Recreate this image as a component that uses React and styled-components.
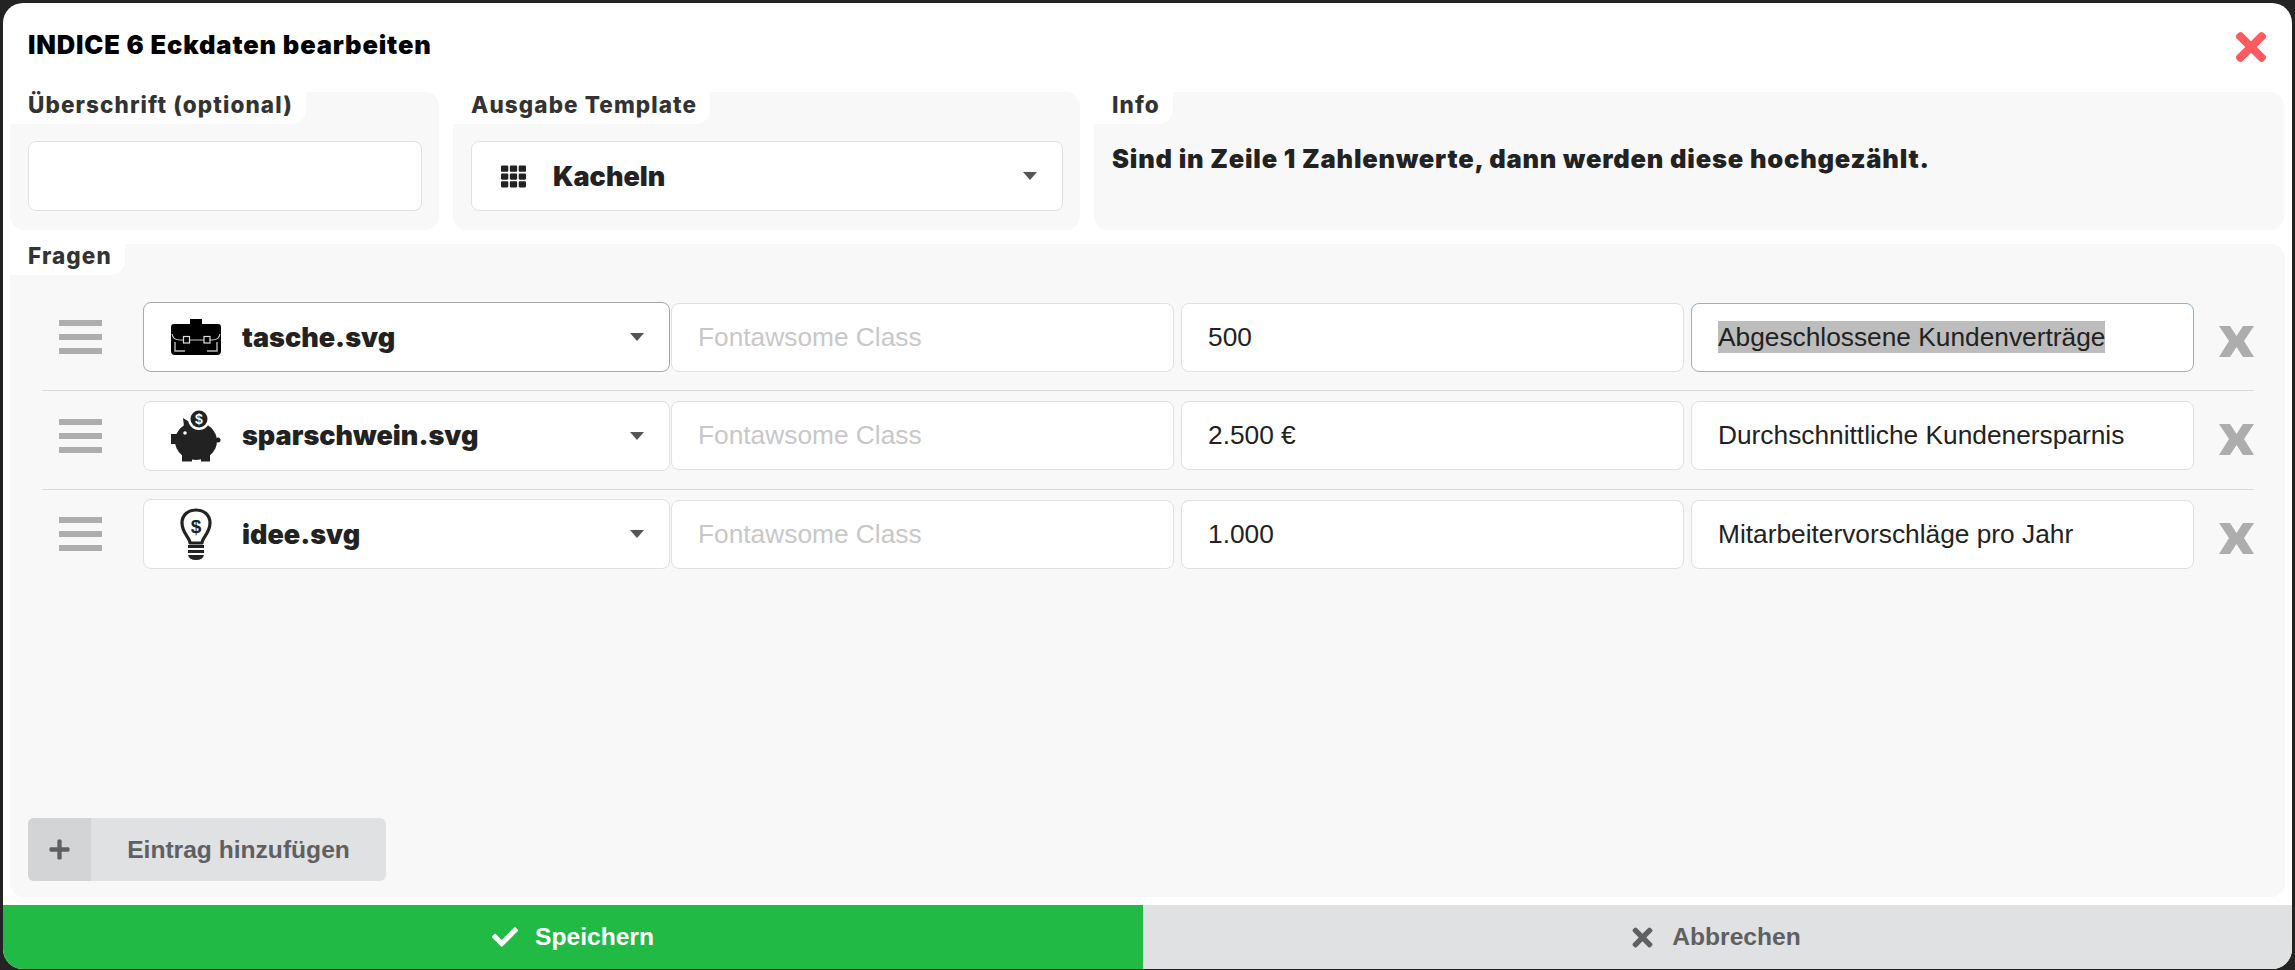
import React from 'react';
import styled, { createGlobalStyle } from 'styled-components';
import { FaTh, FaCheck, FaPlus, FaTimes } from 'react-icons/fa';

const GlobalStyle = createGlobalStyle`
	html, body {
		margin: 0;
		padding: 0;
		background: #232323;
		overflow: hidden;
	}
	* {
		box-sizing: border-box;
	}
`
const Page = styled.div`
	width: 2295px;
	height: 970px;
	padding: 3px 3px 1px 3px;
	background: #232323;
`
const Modal = styled.div`
	width: 2289px;
	height: 966px;
	display: flex;
	flex-direction: column;
	background: #fff;
	border-radius: 20px;
	overflow: hidden;
	color: #222;
`
const Header = styled.div`
	height: 89px;
	flex: none;
	display: flex;
	align-items: center;
	justify-content: space-between;
	padding: 0 19px 7px 25px;
`
const Title = styled.h1`
	margin: 0;
	font-family: Inter, sans-serif;
	font-size: 25.5px;
	font-weight: 900;
	letter-spacing: 0.85px;
	color: #000;
`
const Close = styled.span`
	display: flex;
	color: #ff5a5f;
	font-size: 44px;
	margin-top: 5px;
`
const TopRow = styled.div`
	display: flex;
	gap: 14px;
	padding: 0 7px;
	height: 138px;
	flex: none;
`
const Panel = styled.section`
	position: relative;
	background: #f8f8f8;
	border-radius: 14px;
	width: ${p => p.$width}px;
	padding: 49px 17px 0 18px;
`
const Label = styled.div`
	position: absolute;
	top: 0;
	left: 0;
	height: ${p => p.$height || 32}px;
	padding: 0 13px 8px 18px;
	display: flex;
	align-items: center;
	background: #fff;
	border-bottom-right-radius: 14px;
	font-family: Inter, sans-serif;
	font-size: 22.5px;
	font-weight: 800;
	letter-spacing: 1.1px;
	color: #333;
`
const Field = styled.div`
	flex: ${p => p.$flex ? 1 : 'none'};
	height: ${p => p.$tall ? 70 : 69}px;
	display: flex;
	align-items: center;
	padding: 0 26px;
	background: #fff;
	border: 1px solid ${p => p.$focus ? '#85b7d9' : '#e0e0e0'};
	border-radius: 8px;
	font-family: 'Liberation Sans', Arial, sans-serif;
	font-size: 26.3px;
	color: ${p => p.$placeholder ? '#c8c8c8' : '#222'};
`
const Selected = styled.span`
	background: #bdbdbd;
	line-height: 32px;
`
const Select = styled.div`
	height: 70px;
	width: ${p => p.$width ? p.$width + 'px' : '100%'};
	flex: none;
	display: flex;
	align-items: center;
	background: #fff;
	border: 1px solid ${p => p.$active ? '#a8a8a8' : '#e0e0e0'};
	border-radius: 8px;
	padding: 0 25px 0 ${p => p.$left || 27}px;
	font-family: Inter, sans-serif;
	font-size: 27px;
	font-weight: 900;
	color: #222;
`
const IconSlot = styled.span`
	width: 50px;
	height: 54px;
	flex: none;
	display: flex;
	align-items: center;
	justify-content: center;
	margin-right: 21px;
	color: #222;
`
const GridIcon = styled(FaTh)`
	font-size: 25px;
	margin-right: 27px;
	flex: none;
`
const Caret = styled.span`
	margin-left: auto;
	width: 0;
	height: 0;
	border-left: 7px solid transparent;
	border-right: 7px solid transparent;
	border-top: 8px solid #555;
`
const InfoText = styled.p`
	margin: 0;
	font-family: Inter, sans-serif;
	font-size: 25.5px;
	font-weight: 900;
	letter-spacing: 0.8px;
	line-height: 36px;
	color: #222;
`
const Questions = styled.section`
	position: relative;
	flex: 1;
	margin: 14px 7px 8px 7px;
	background: #f8f8f8;
	border-radius: 14px;
	display: flex;
	flex-direction: column;
	padding: 48.5px 18px 16px 18px;
`
const Rows = styled.div`
	display: flex;
	flex-direction: column;
	padding: 0 13px 0 14px;
`
const Row = styled.div`
	display: flex;
	align-items: center;
	padding: 9.5px 0 18px 0;
	border-bottom: ${p => p.$last ? 'none' : '1px solid #dcdcdc'};
`
const Handle = styled.div`
	width: 101px;
	flex: none;
	display: flex;
	flex-direction: column;
	gap: 8px;
	padding-left: 17px;
	& span {
		display: block;
		width: 43px;
		height: 6px;
		background: #adadad;
	}
`
const Inputs = styled.div`
	flex: 1;
	display: flex;
	gap: 7px;
	margin-left: 1px;
`
const Remove = styled.svg`
	width: 35px;
	height: 31px;
	flex: none;
	margin: 8px 0 0 25px;
	fill: #adadad;
`
const AddButton = styled.button`
	margin-top: auto;
	width: 358px;
	height: 63px;
	display: flex;
	padding: 0;
	border: none;
	border-radius: 6px;
	overflow: hidden;
	background: #e0e1e2;
	color: #5f6062;
	font-family: 'Liberation Sans', Arial, sans-serif;
	font-size: 24.6px;
	font-weight: 700;
`
const AddIcon = styled.span`
	width: 63px;
	flex: none;
	display: flex;
	align-items: center;
	justify-content: center;
	background: #d3d4d5;
	font-size: 23px;
`
const AddLabel = styled.span`
	flex: 1;
	display: flex;
	align-items: center;
	justify-content: center;
`
const Footer = styled.div`
	height: 64px;
	flex: none;
	display: flex;
`
const FooterButton = styled.button`
	width: ${p => p.$width}px;
	flex: none;
	display: flex;
	align-items: center;
	justify-content: center;
	gap: ${p => p.$gap}px;
	padding: 0 ${p => p.$pad || 0}px 0 0;
	border: none;
	background: ${p => p.$bg};
	color: ${p => p.$color};
	font-family: 'Liberation Sans', Arial, sans-serif;
	font-size: 24.6px;
	font-weight: 700;
	& svg {
		font-size: ${p => p.$icon}px;
	}
`

function Briefcase() {
	return (
		<svg width="50" height="36" viewBox="0 0 50 36">
			<rect x="19" y="0" width="12" height="5" fill="#000" />
			<path d="M3 5h44q3 0 3 3v24q0 4-4 4H4q-4 0-4-4V8q0-3 3-3z" fill="#000" />
			<path d="M1 15q1 6 8 6h32q7 0 8-6" fill="none" stroke="#ccc" strokeWidth="1.2" />
			<rect x="12.5" y="17.5" width="6" height="6.5" fill="#000" stroke="#ddd" strokeWidth="1.2" />
			<rect x="33" y="17.5" width="6" height="6.5" fill="#000" stroke="#ddd" strokeWidth="1.2" />
			<path d="M4 23v9h10M46 23v9H36" fill="none" stroke="#bbb" strokeWidth="1.4" />
		</svg>
	)
}

function Piggy() {
	return (
		<svg width="50" height="52" viewBox="0 0 50 52">
			<path d="M12 8l13 8-11 8z" fill="#222" />
			<ellipse cx="25" cy="31" rx="21" ry="19" fill="#222" />
			<rect x="0" y="24" width="6" height="10" fill="#222" />
			<rect x="11" y="42" width="10" height="9.5" fill="#222" />
			<rect x="30" y="42" width="9" height="9.5" fill="#222" />
			<circle cx="47" cy="30" r="2.5" fill="#222" />
			<circle cx="28" cy="9" r="11" fill="#fff" />
			<circle cx="28" cy="9" r="8.5" fill="#222" />
			<text x="28" y="14" textAnchor="middle" fontFamily="'Liberation Sans', sans-serif" fontSize="14" fontWeight="700" fill="#fff">$</text>
			<circle cx="14" cy="23" r="1.8" fill="#fff" />
		</svg>
	)
}

function Bulb() {
	return (
		<svg width="32" height="52" viewBox="0 0 32 52">
			<path d="M10 35c0-5-8-10-8-20C2 7 8 2 16 2s14 5 14 13c0 10-8 15-8 20z" fill="none" stroke="#222" strokeWidth="3.2" strokeLinejoin="round" />
			<rect x="8" y="37" width="16" height="3" fill="#222" />
			<rect x="8" y="42" width="16" height="3" fill="#222" />
			<path d="M8 47h16q-1 5-8 5t-8-5z" fill="#222" />
			<text x="16" y="25" textAnchor="middle" fontFamily="'Liberation Sans', sans-serif" fontSize="19" fontWeight="700" fill="#222">$</text>
		</svg>
	)
}

const entries = [
	{ icon: <Briefcase />, name: 'tasche.svg', value: '500', text: 'Abgeschlossene Kundenverträge', active: true },
	{ icon: <Piggy />, name: 'sparschwein.svg', value: '2.500 €', text: 'Durchschnittliche Kundenersparnis' },
	{ icon: <Bulb />, name: 'idee.svg', value: '1.000', text: 'Mitarbeitervorschläge pro Jahr' },
];

function App() {
	return (
		<Page>
			<GlobalStyle />
			<Modal>
				<Header>
					<Title>INDICE 6 Eckdaten bearbeiten</Title>
					<Close><FaTimes /></Close>
				</Header>
				<TopRow>
					<Panel $width={429}>
						<Label>Überschrift (optional)</Label>
						<Field $tall />
					</Panel>
					<Panel $width={627}>
						<Label>Ausgabe Template</Label>
						<Select $left={29}>
							<GridIcon />
							<span>Kacheln</span>
							<Caret />
						</Select>
					</Panel>
					<Panel $width={1190}>
						<Label>Info</Label>
						<InfoText>Sind in Zeile 1 Zahlenwerte, dann werden diese hochgezählt.</InfoText>
					</Panel>
				</TopRow>
				<Questions>
					<Label $height={31}>Fragen</Label>
					<Rows>
						{entries.map((entry, i) => (
							<Row key={entry.name} $last={i === entries.length - 1}>
								<Handle><span /><span /><span /></Handle>
								<Select $width={527} $active={entry.active}>
									<IconSlot>{entry.icon}</IconSlot>
									<span>{entry.name}</span>
									<Caret />
								</Select>
								<Inputs>
									<Field $flex $placeholder>Fontawsome Class</Field>
									<Field $flex>{entry.value}</Field>
									<Field $flex $focus={entry.active}>
										{entry.active ? <Selected>{entry.text}</Selected> : entry.text}
									</Field>
								</Inputs>
								<Remove viewBox="0 0 35 31">
									<path d="M0 0h11l6.5 10L24 0h11L25 15l10 16H24l-6.5-10L11 31H0l10-16z" />
								</Remove>
							</Row>
						))}
					</Rows>
					<AddButton>
						<AddIcon><FaPlus /></AddIcon>
						<AddLabel>Eintrag hinzufügen</AddLabel>
					</AddButton>
				</Questions>
				<Footer>
					<FooterButton $width={1140} $bg="#21ba45" $color="#fff" $gap={17} $icon={26}><FaCheck />Speichern</FooterButton>
					<FooterButton $width={1149} $bg="#e0e1e2" $color="#5f6062" $gap={15} $pad={6} $icon={29}><FaTimes />Abbrechen</FooterButton>
				</Footer>
			</Modal>
		</Page>
	)
}

export default App;
